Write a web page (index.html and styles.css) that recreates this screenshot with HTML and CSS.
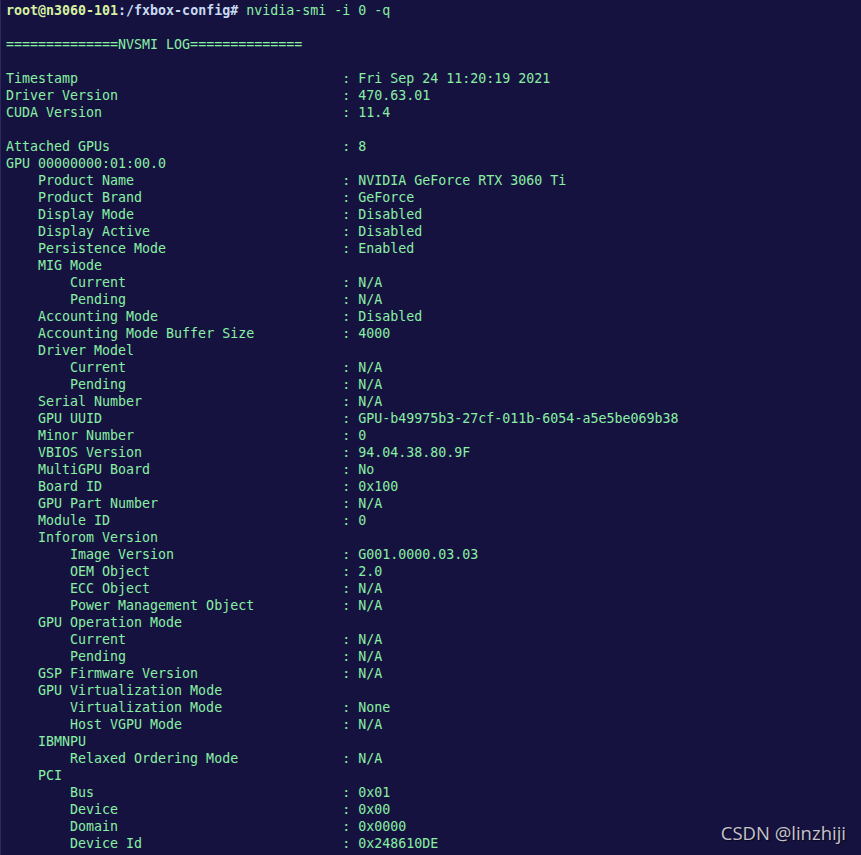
FILE: index.html
```html
<!DOCTYPE html>
<html lang="en">
<head>
<meta charset="utf-8">
<title>nvidia-smi</title>
<link rel="stylesheet" href="styles.css">
</head>
<body>
<div class="term">
  <div class="row"><span class="user">root@n3060-101</span><span class="path">:/fxbox-config#</span> nvidia-smi -i 0 -q</div>
  <div class="row"></div>
  <div class="row">==============NVSMI LOG==============</div>
  <div class="row"></div>
  <div class="row"><span class="k">Timestamp</span>: Fri Sep 24 11:20:19 2021</div>
  <div class="row"><span class="k">Driver Version</span>: 470.63.01</div>
  <div class="row"><span class="k">CUDA Version</span>: 11.4</div>
  <div class="row"></div>
  <div class="row"><span class="k">Attached GPUs</span>: 8</div>
  <div class="row">GPU 00000000:01:00.0</div>
  <div class="row"><span class="k i1">Product Name</span>: NVIDIA GeForce RTX 3060 Ti</div>
  <div class="row"><span class="k i1">Product Brand</span>: GeForce</div>
  <div class="row"><span class="k i1">Display Mode</span>: Disabled</div>
  <div class="row"><span class="k i1">Display Active</span>: Disabled</div>
  <div class="row"><span class="k i1">Persistence Mode</span>: Enabled</div>
  <div class="row"><span class="k i1">MIG Mode</span></div>
  <div class="row"><span class="k i2">Current</span>: N/A</div>
  <div class="row"><span class="k i2">Pending</span>: N/A</div>
  <div class="row"><span class="k i1">Accounting Mode</span>: Disabled</div>
  <div class="row"><span class="k i1">Accounting Mode Buffer Size</span>: 4000</div>
  <div class="row"><span class="k i1">Driver Model</span></div>
  <div class="row"><span class="k i2">Current</span>: N/A</div>
  <div class="row"><span class="k i2">Pending</span>: N/A</div>
  <div class="row"><span class="k i1">Serial Number</span>: N/A</div>
  <div class="row"><span class="k i1">GPU UUID</span>: GPU-b49975b3-27cf-011b-6054-a5e5be069b38</div>
  <div class="row"><span class="k i1">Minor Number</span>: 0</div>
  <div class="row"><span class="k i1">VBIOS Version</span>: 94.04.38.80.9F</div>
  <div class="row"><span class="k i1">MultiGPU Board</span>: No</div>
  <div class="row"><span class="k i1">Board ID</span>: 0x100</div>
  <div class="row"><span class="k i1">GPU Part Number</span>: N/A</div>
  <div class="row"><span class="k i1">Module ID</span>: 0</div>
  <div class="row"><span class="k i1">Inforom Version</span></div>
  <div class="row"><span class="k i2">Image Version</span>: G001.0000.03.03</div>
  <div class="row"><span class="k i2">OEM Object</span>: 2.0</div>
  <div class="row"><span class="k i2">ECC Object</span>: N/A</div>
  <div class="row"><span class="k i2">Power Management Object</span>: N/A</div>
  <div class="row"><span class="k i1">GPU Operation Mode</span></div>
  <div class="row"><span class="k i2">Current</span>: N/A</div>
  <div class="row"><span class="k i2">Pending</span>: N/A</div>
  <div class="row"><span class="k i1">GSP Firmware Version</span>: N/A</div>
  <div class="row"><span class="k i1">GPU Virtualization Mode</span></div>
  <div class="row"><span class="k i2">Virtualization Mode</span>: None</div>
  <div class="row"><span class="k i2">Host VGPU Mode</span>: N/A</div>
  <div class="row"><span class="k i1">IBMNPU</span></div>
  <div class="row"><span class="k i2">Relaxed Ordering Mode</span>: N/A</div>
  <div class="row"><span class="k i1">PCI</span></div>
  <div class="row"><span class="k i2">Bus</span>: 0x01</div>
  <div class="row"><span class="k i2">Device</span>: 0x00</div>
  <div class="row"><span class="k i2">Domain</span>: 0x0000</div>
  <div class="row"><span class="k i2">Device Id</span>: 0x248610DE</div>
</div>
<div class="watermark">CSDN @linzhiji</div>
</body>
</html>
```

FILE: styles.css
```css
html, body {
  margin: 0;
  padding: 0;
  background: #16123f;
  height: 100%;
  overflow: hidden;
}

.term {
  box-sizing: border-box;
  height: 855px;
  padding: 2px 0 0 5px;
  border-left: 1px solid #2c2960;
  font-family: "DejaVu Sans Mono", "Liberation Mono", monospace;
  font-size: 13.3px;
  line-height: 17px;
  color: #88f0a4;
}

.row {
  height: 17px;
  white-space: pre;
}

.k {
  display: inline-block;
  box-sizing: border-box;
  width: 42ch;
}

.k.i1 {
  padding-left: 4ch;
}

.k.i2 {
  padding-left: 8ch;
}

.user {
  font-weight: bold;
  color: #d6f0a2;
}

.path {
  font-weight: bold;
  color: #c8daf2;
}

.watermark {
  position: absolute;
  right: 15px;
  bottom: 10px;
  font-family: "Open Sans", "Noto Sans", sans-serif;
  font-size: 18.5px;
  color: #c4c4cc;
  text-shadow: 1px 1px 1px rgba(0, 0, 0, 0.6);
}
```
